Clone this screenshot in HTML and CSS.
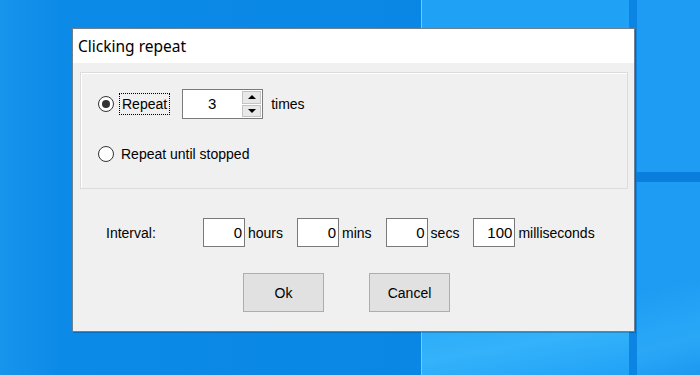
FILE: index.html
```html
<!DOCTYPE html>
<html lang="en">

<head>
    <meta charset="UTF-8">
    <meta name="viewport" content="width=device-width, initial-scale=1.0">
    <title>Clicking repeat</title>
    <link rel="stylesheet" href="styles.css">
</head>

<body>
    <div class="desktop">
        <!-- wallpaper panes -->
        <div class="wall wall-mid"></div>
        <div class="wall wall-band"></div>
        <div class="wall wall-right"></div>
        <div class="wall wall-stripe"></div>

        <div class="dialog">
            <div class="titlebar">Clicking repeat</div>

            <div class="dialog-body">
                <div class="group">
                    <div class="option-row">
                        <span class="radio checked"></span>
                        <span class="option-label focused">Repeat</span>
                        <div class="spinner">
                            <span class="spinner-value">3</span>
                            <div class="spinner-buttons">
                                <span class="spin-btn"><span class="arrow up"></span></span>
                                <span class="spin-btn"><span class="arrow down"></span></span>
                            </div>
                        </div>
                        <span class="suffix">times</span>
                    </div>

                    <div class="option-row second">
                        <span class="radio"></span>
                        <span class="option-label">Repeat until stopped</span>
                    </div>
                </div>

                <div class="interval-row">
                    <span class="interval-label">Interval:</span>
                    <span class="num-box">0</span>
                    <span class="unit">hours</span>
                    <span class="num-box">0</span>
                    <span class="unit">mins</span>
                    <span class="num-box">0</span>
                    <span class="unit">secs</span>
                    <span class="num-box">100</span>
                    <span class="unit">milliseconds</span>
                </div>

                <div class="button-row">
                    <button class="btn">Ok</button>
                    <button class="btn">Cancel</button>
                </div>
            </div>
        </div>
    </div>
</body>

</html>
```

FILE: styles.css
```css
body {
    margin: 0;
    font-family: 'Liberation Sans', Arial, sans-serif;
}

.desktop {
    position: relative;
    width: 700px;
    height: 375px;
    overflow: hidden;
    background: linear-gradient(90deg, #1794ec 0, #0c8ae7 60px, #0a87e5 420px);
    padding-top: 28px;
    box-sizing: border-box;
}

.wall {
    position: absolute;
}

.wall-mid {
    left: 421px;
    top: 0;
    width: 207px;
    height: 375px;
    background: linear-gradient(170deg, #1fa1f5 0, #22a6f8 70%, #34b2fa 88%, #20a2f6 100%);
    border-left: 1px solid #62d2ff;
}

.wall-band {
    left: 629px;
    top: 0;
    width: 8px;
    height: 375px;
    background-color: #0b84e4;
}

.wall-right {
    left: 637px;
    top: 0;
    width: 63px;
    height: 375px;
    background: linear-gradient(165deg, #1e9cf3 0, #1e9cf3 75%, #2aa8f7 90%, #1c98f0 100%);
}

.wall-stripe {
    left: 629px;
    top: 172px;
    width: 71px;
    height: 10px;
    background-color: #0a7edd;
}

.dialog {
    position: relative;
    z-index: 1;
    width: 561px;
    height: 302px;
    margin-left: 72px;
    background-color: #f0f0f0;
    border: 1px solid #6f808e;
    box-shadow: 1px 1px 0 rgba(0, 0, 0, 0.2);
}

.titlebar {
    height: 34px;
    line-height: 34px;
    padding-left: 5px;
    background-color: #ffffff;
    font-family: 'Noto Sans', 'Open Sans', sans-serif;
    font-size: 15.5px;
    color: #000;
}

.dialog-body {
    font-size: 14px;
    color: #000;
}

.group {
    box-sizing: border-box;
    width: 548px;
    height: 117px;
    margin: 9px 0 0 7px;
    padding: 16px 0 0 17px;
    border: 1px solid #dcdcdc;
    box-shadow: inset 1px 1px 0 #ffffff;
}

.option-row {
    display: flex;
    align-items: center;
    height: 30px;
}

.option-row.second {
    height: 20px;
    margin-top: 25px;
}

.radio {
    position: relative;
    box-sizing: border-box;
    width: 16px;
    height: 16px;
    border: 1px solid #333;
    border-radius: 50%;
    background-color: #ffffff;
}

.radio.checked::after {
    content: "";
    position: absolute;
    left: 3px;
    top: 3px;
    width: 8px;
    height: 8px;
    border-radius: 50%;
    background-color: #333;
}

.option-label {
    margin-left: 7px;
}

.option-label.focused {
    margin-left: 5px;
    padding: 0 2px;
    height: 20px;
    line-height: 20px;
    border: 1px dotted #000;
}

.spinner {
    display: flex;
    box-sizing: border-box;
    width: 81px;
    height: 30px;
    margin-left: 12px;
    border: 1px solid #7a7a7a;
    background-color: #ffffff;
}

.spinner-value {
    flex: 1;
    text-align: center;
    line-height: 28px;
    font-size: 15px;
}

.spinner-buttons {
    display: flex;
    flex-direction: column;
    width: 21px;
    padding: 1px;
    gap: 1px;
    box-sizing: border-box;
}

.spin-btn {
    flex: 1;
    display: flex;
    align-items: center;
    justify-content: center;
    background-color: #e8e8e8;
    border: 1px solid #c4c4c4;
}

.arrow {
    width: 0;
    height: 0;
    border-left: 4px solid transparent;
    border-right: 4px solid transparent;
}

.arrow.up {
    border-bottom: 4px solid #000;
}

.arrow.down {
    border-top: 4px solid #000;
}

.suffix {
    margin-left: 8px;
}

.interval-row {
    display: flex;
    align-items: center;
    height: 29px;
    margin-top: 29px;
    padding-left: 33px;
}

.interval-label {
    width: 97px;
}

.num-box {
    box-sizing: border-box;
    width: 42px;
    height: 29px;
    padding-right: 2px;
    line-height: 27px;
    text-align: right;
    font-size: 15px;
    background-color: #ffffff;
    border: 1px solid #7a7a7a;
}

.unit {
    margin: 0 14px 0 3px;
}

.button-row {
    display: flex;
    gap: 45px;
    margin-top: 26px;
    padding-left: 170px;
}

.btn {
    width: 81px;
    height: 39px;
    padding: 0;
    font-family: 'Liberation Sans', Arial, sans-serif;
    font-size: 14px;
    color: #000;
    background-color: #e1e1e1;
    border: 1px solid #adadad;
}
```
